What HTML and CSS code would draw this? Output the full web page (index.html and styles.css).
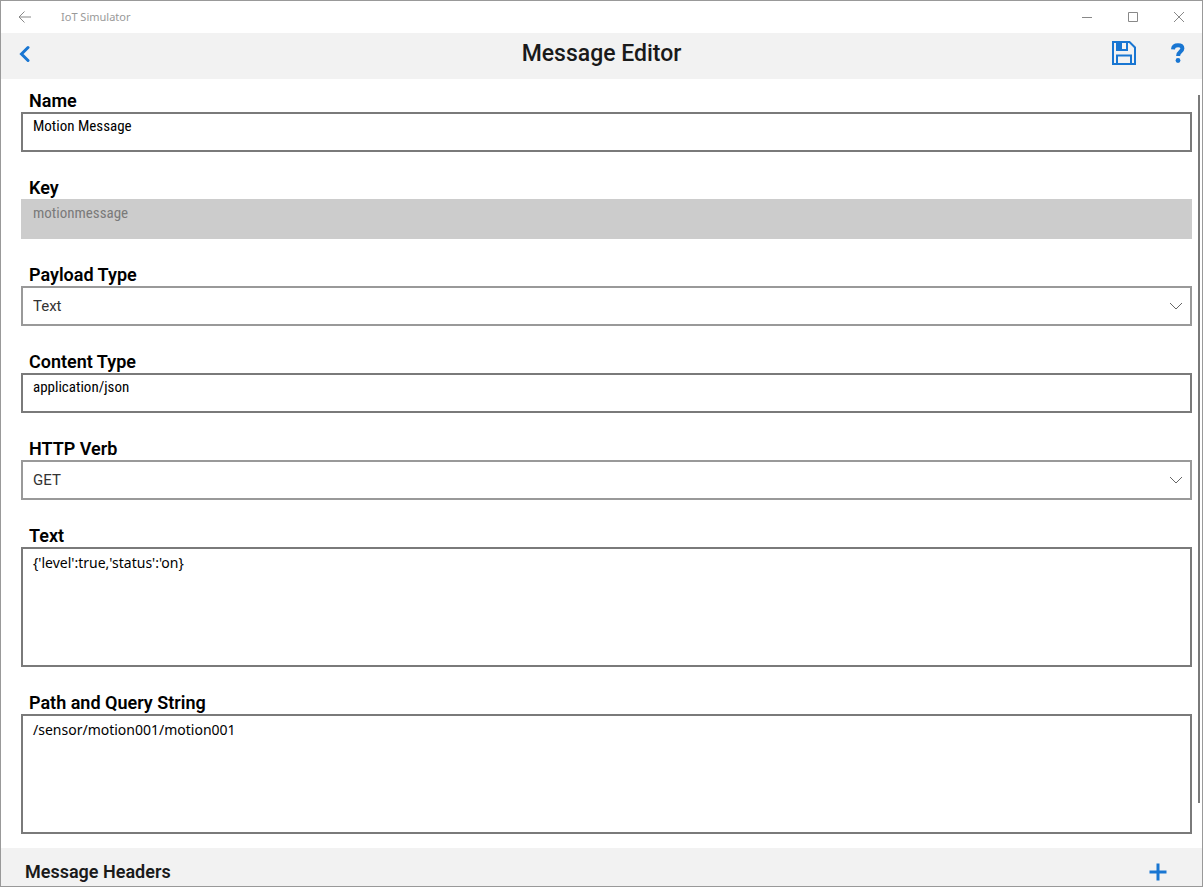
FILE: index.html
```html
<!DOCTYPE html>
<html lang="en">
<head>
<meta charset="utf-8">
<title>IoT Simulator</title>
<link rel="stylesheet" href="styles.css">
</head>
<body>
<div class="window">
  <div class="titlebar">
    <button class="caption-button back" aria-label="Back"><svg width="14" height="14" viewBox="0 0 14 14"><path d="M13 7H1.500M6.500 1.500L1 7l5.500 5.500"/></svg></button>
    <span class="app-name">IoT Simulator</span>
    <button class="caption-button" aria-label="Minimize"><svg width="12" height="12" viewBox="0 0 12 12"><path d="M1 6.500h10"/></svg></button>
    <button class="caption-button" aria-label="Maximize"><svg width="12" height="12" viewBox="0 0 12 12"><path d="M1.500 1.500h9v9h-9z"/></svg></button>
    <button class="caption-button" aria-label="Close"><svg width="12" height="12" viewBox="0 0 12 12"><path d="M1 1l10 10M11 1L1 11"/></svg></button>
  </div>
  <header class="toolbar">
    <div class="toolbar-side">
      <button class="icon-button" aria-label="Go back"><svg width="12" height="18" viewBox="0 0 12 18"><path class="thick" stroke-linecap="round" d="M10 2.500L3.500 9l6.500 6.500"/></svg></button>
    </div>
    <h1>Message Editor</h1>
    <div class="toolbar-side actions">
      <button class="icon-button" aria-label="Save"><svg width="26" height="26" viewBox="0 0 26 26"><path class="line" d="M2 2h16.500L24 7.500V24H2zM6 24v-8.500h14V24M6 2v8h10V2"/><path class="solid" d="M6 2h5v8H6z"/></svg></button>
      <button class="icon-button" aria-label="Help"><svg width="14" height="20" viewBox="0 0 14 20"><path class="thick heavy" d="M2 6.300C2.200 3.500 4 2.300 7 2.300c2.800 0 4.400 1.300 4.400 3.300 0 3-4.300 3.200-4.300 7.400"/><circle class="solid" cx="7" cy="17.500" r="2.400"/></svg></button>
    </div>
  </header>
  <main class="content">
    <form class="fields">
      <div class="field"><label for="name">Name</label><input class="box" id="name" type="text" value="Motion Message"></div>
      <div class="field"><label for="key">Key</label><input class="box" id="key" type="text" value="motionmessage" disabled></div>
      <div class="field"><label for="payload">Payload Type</label>
        <div class="picker"><select class="box" id="payload"><option>Text</option></select><svg class="chevron" width="14" height="8" viewBox="0 0 14 8"><path d="M1 1l6 6 6-6"/></svg></div></div>
      <div class="field"><label for="content">Content Type</label><input class="box" id="content" type="text" value="application/json"></div>
      <div class="field"><label for="verb">HTTP Verb</label>
        <div class="picker"><select class="box" id="verb"><option>GET</option></select><svg class="chevron" width="14" height="8" viewBox="0 0 14 8"><path d="M1 1l6 6 6-6"/></svg></div></div>
      <div class="field"><label for="text">Text</label><textarea class="box" id="text" spellcheck="false">{'level':true,'status':'on}</textarea></div>
      <div class="field"><label for="path">Path and Query String</label><textarea class="box" id="path" spellcheck="false">/sensor/motion001/motion001</textarea></div>
    </form>
    <section class="headers">
      <h2>Message Headers</h2>
      <button class="icon-button" aria-label="Add header"><svg width="18" height="18" viewBox="0 0 18 18"><path class="thick" d="M9 0.500v17M0.500 9h17"/></svg></button>
    </section>
    <div class="scroll-thumb"></div>
  </main>
</div>
</body>
</html>
```
FILE: styles.css
```css
* { box-sizing: border-box; }
body { margin: 0; background: #fff; font-family: Roboto, sans-serif; color: #000; }
h1, h2 { margin: 0; font-weight: 500; color: #1a1a1a; }
svg { display: block; fill: none; }
button { border: 0; padding: 0; background: none; display: flex; align-items: center; justify-content: center; }

.window { min-height: 100vh; border: 1px solid #999; display: flex; flex-direction: column; }

.titlebar { display: flex; height: 32px; color: #999; }
.caption-button { width: 46px; }
.caption-button svg { stroke: #888; stroke-width: 1; }
.back { width: 48px; }
.app-name { flex: 1; padding-left: 12px; font: 11px/32px "Noto Sans", sans-serif; }

.toolbar { display: flex; align-items: center; height: 46px; padding: 0 17px; background: #f2f2f2; }
.toolbar h1 { font-size: 23px; line-height: 28px; padding-bottom: 4px; }
.toolbar-side { flex: 1; display: flex; align-items: center; padding-bottom: 4px; }
.actions { justify-content: flex-end; gap: 34px; padding-bottom: 6px; }
.line { stroke: #1976d2; stroke-width: 2; }
.thick { stroke: #1976d2; stroke-width: 3; }
.heavy { stroke-width: 4; }
.solid { fill: #1976d2; }

.content { position: relative; flex: 1; display: flex; flex-direction: column; }
.fields { display: flex; flex-direction: column; gap: 25px; padding: 11px 10px 14px 20px; }
.field { display: flex; flex-direction: column; }
.field label { padding-left: 8px; font-size: 18px; line-height: 22px; font-weight: 600; }
.box { width: 100%; height: 40px; margin: 0; padding: 0 10px 12px; border: 2px solid #7a7a7a; border-radius: 0; background: #fff; color: #000; font-family: "Roboto Condensed", Roboto, sans-serif; font-size: 15px; outline: 0; }
.box:disabled { border-color: #ccc; background: #ccc; color: #7a7a7a; }
.picker { position: relative; }
select.box { display: block; appearance: none; padding: 0 30px 0 10px; border-color: #999; color: #333; font-family: Roboto, sans-serif; }
.chevron { position: absolute; right: 9px; top: 16px; stroke: #666; pointer-events: none; }
textarea.box { display: block; height: 120px; padding: 4px 10px; resize: none; font: 14px/20px "Noto Sans", sans-serif; }

.headers { flex: 1; display: flex; align-items: center; justify-content: space-between; padding: 10px 35px 0 24px; background: #f2f2f2; }
.headers h2 { font-size: 18px; line-height: 28px; font-weight: 600; }
.scroll-thumb { position: absolute; right: 2px; top: 2%; bottom: 83px; width: 2px; background: #7a7a7a; }
```
